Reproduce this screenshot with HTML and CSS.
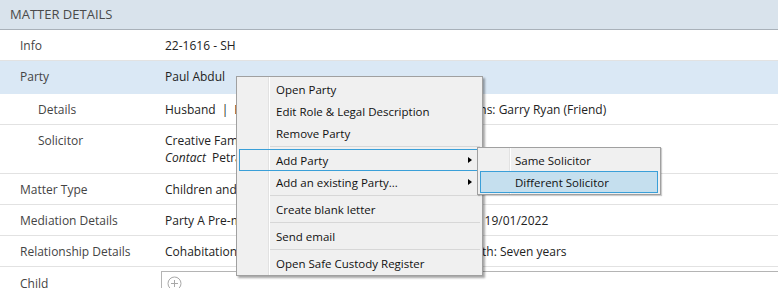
FILE: index.html
```html
<!DOCTYPE html>
<html lang="en">
<head>
    <meta charset="UTF-8">
    <title>Matter Details</title>
    <link rel="stylesheet" href="styles.css">
</head>
<body>
    <div class="panel">
        <div class="panel-head">MATTER DETAILS</div>

        <div class="row">
            <div class="label">Info</div>
            <div class="value">22-1616 - SH</div>
        </div>
        <div class="row selected">
            <div class="label">Party</div>
            <div class="value">Paul Abdul</div>
        </div>
        <div class="row sub">
            <div class="label">Details</div>
            <div class="value">Husband<span class="sep">|</span>Employed: Full-time driver<span class="sep">|</span>Support persons: Garry Ryan (Friend)</div>
        </div>
        <div class="row sub tall">
            <div class="label">Solicitor</div>
            <div class="value">
                Creative Family Lawyers<br>
                <em>Contact</em> Petra Wilson
            </div>
        </div>
        <div class="row">
            <div class="label">Matter Type</div>
            <div class="value">Children and Property</div>
        </div>
        <div class="row">
            <div class="label">Mediation Details</div>
            <div class="value">Party A Pre-mediation: Completed<span class="sep">|</span>Date of Separation: 19/01/2022</div>
        </div>
        <div class="row">
            <div class="label">Relationship Details</div>
            <div class="value">Cohabitation 2014<span class="sep">|</span>Married: 2016<span class="sep">|</span>Relationship Length: Seven years</div>
        </div>
        <div class="row child">
            <div class="label">Child</div>
            <div class="field">
                <svg class="add-icon" width="15" height="15" viewBox="0 0 15 15">
                    <circle cx="7.5" cy="7.5" r="6.5" fill="none" stroke="#a8a8a8" stroke-width="1"/>
                    <path d="M7.5 4v7M4 7.5h7" stroke="#a8a8a8" stroke-width="1"/>
                </svg>
            </div>
        </div>

        <div class="menu">
            <div class="menu-item">Open Party</div>
            <div class="menu-item">Edit Role &amp; Legal Description</div>
            <div class="menu-item">Remove Party</div>
            <div class="menu-sep"></div>
            <div class="menu-item open has-sub">Add Party</div>
            <div class="menu-item has-sub">Add an existing Party...</div>
            <div class="menu-sep"></div>
            <div class="menu-item">Create blank letter</div>
            <div class="menu-sep"></div>
            <div class="menu-item">Send email</div>
            <div class="menu-sep"></div>
            <div class="menu-item">Open Safe Custody Register</div>
        </div>

        <div class="menu submenu">
            <div class="menu-item">Same Solicitor</div>
            <div class="menu-item hover">Different Solicitor</div>
        </div>
    </div>
</body>
</html>
```

FILE: styles.css
```css
body {
    margin: 0;
    font-family: 'Open Sans', 'Noto Sans', sans-serif;
    font-size: 12px;
    color: #333;
    background: white;
    overflow: hidden;
}

.panel {
    position: relative;
    height: 288px;
    overflow: hidden;
}

.panel-head {
    height: 29px;
    line-height: 29px;
    padding-left: 10px;
    background: #d9e3ec;
    border-bottom: 1px solid #a9b1b9;
    font-size: 13px;
    color: #4a4a4a;
}

.row {
    display: grid;
    grid-template-columns: 165px 1fr;
    padding: 7px 0 6px;
    line-height: 17px;
    border-bottom: 1px solid #e2e2e2;
    white-space: nowrap;
}

.row .label {
    padding-left: 20px;
    color: #444;
}

.row.sub .label {
    padding-left: 38px;
}

.row .value {
    color: #222;
}

.row .value em {
    margin-right: 3px;
}

.sep {
    margin: 0 6px;
}

.row.selected {
    background: #dae8f5;
    padding-bottom: 8px;
    border-bottom-color: #dae8f5;
}

.row.tall {
    padding-bottom: 7px;
}

.row.child {
    grid-template-columns: 161px 1fr;
    padding: 4px 0 0;
    border-bottom: none;
}

.row.child .label {
    padding-top: 4px;
}

.field {
    height: 30px;
    border: 1px solid #b4b4b4;
    border-right: none;
    padding: 4px 0 0 5px;
}

.add-icon {
    display: block;
}

/* context menu */
.menu {
    position: absolute;
    left: 236px;
    top: 76px;
    width: 245px;
    padding: 1px 0;
    background: #f0f0f0;
    border: 1px solid #a0a0a0;
    box-shadow: 2px 2px 2px rgba(0,0,0,0.35);
    color: #111;
    font-size: 11.5px;
}

.menu::before {
    content: "";
    position: absolute;
    left: 31px;
    top: 0;
    bottom: 0;
    width: 1px;
    background: #e2e2e2;
    border-right: 1px solid #fff;
}

.menu-item {
    position: relative;
    height: 20px;
    line-height: 22px;
    margin: 0 2px;
    padding-left: 36px;
    border: 1px solid transparent;
}

.menu-item.open {
    border-color: #3a9fd8;
}

.menu-item.has-sub::after {
    content: "";
    position: absolute;
    right: 7px;
    top: 7px;
    border-left: 4px solid #000;
    border-top: 3.5px solid transparent;
    border-bottom: 3.5px solid transparent;
}

.menu-sep {
    height: 0;
    margin: 2px 2px 2px 33px;
    border-top: 1px solid #d7d7d7;
}

.submenu {
    left: 477px;
    top: 147px;
    width: 182px;
    box-shadow: 1px 1px 1px rgba(0,0,0,0.2);
    z-index: 2;
}

.submenu .menu-item {
    padding-left: 34px;
}

.menu-item.hover {
    background: #c5dfee;
    border-color: #3a9fd8;
}
```
